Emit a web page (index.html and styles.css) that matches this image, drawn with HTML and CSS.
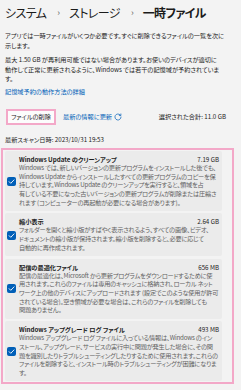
FILE: index.html
```html
<!DOCTYPE html>
<html lang="ja">
<head>
<meta charset="utf-8">
<link rel="stylesheet" href="styles.css">
</head>
<body>
<div class="page">
  <h1 class="crumbs"><span class="crumb">システム</span><span class="sep">›</span><span class="crumb">ストレージ</span><span class="sep">›</span><span class="crumb current">一時ファイル</span></h1>
  <p class="text intro">アプリでは一時ファイルがいくつか必要です。すぐに削除できるファイルの一覧を次に<br>示します。</p>
  <p class="text reserve">最大 1.50 GB が再利用可能ではない場合があります。お使いのデバイスが適切に<br>動作して正常に更新されるように、Windows では若干の記憶域が予約されていま<br>す。</p>
  <a class="link more">記憶域予約の動作方法の詳細</a>
  <div class="actions">
    <button class="btn">ファイルの削除</button>
    <a class="link refresh">最新の情報に更新 <svg class="ricon" viewBox="0 0 10 10" width="8" height="8"><path d="M7.6 2.2A3.8 3.8 0 1 0 8.8 5" fill="none" stroke="#005fb8" stroke-width="0.9" stroke-linecap="round"/><path d="M8.6 1.2V3.2H6.6" fill="none" stroke="#005fb8" stroke-width="0.9" stroke-linecap="round" stroke-linejoin="round"/></svg></a>
    <span class="total">選択された合計: 11.0 GB</span>
  </div>
  <div class="scan">最新スキャン日時: 2023/10/31 19:53</div>
  <div class="listwrap">
    <div class="list">
      <div class="card">
        <span class="check"><svg viewBox="0 0 10 10" width="9" height="9"><path d="M2.4 5.2L4.2 7L7.8 3.2" fill="none" stroke="#fff" stroke-width="1" stroke-linecap="round" stroke-linejoin="round"/></svg></span>
        <div class="body">
          <div class="head"><span class="title">Windows Update のクリーンアップ</span><span class="size">7.19 GB</span></div>
          <div class="desc">Windows では、新しいバージョンの更新プログラムをインストールした後でも、<br>Windows Update からインストールしたすべての更新プログラムのコピーを保<br>持しています。Windows Update のクリーンアップを実行すると、領域を占<br>有している不要になった古いバージョンの更新プログラムが削除または圧縮さ<br>れます (コンピューターの再起動が必要になる場合があります)。</div>
        </div>
      </div>
      <div class="card">
        <span class="check"><svg viewBox="0 0 10 10" width="9" height="9"><path d="M2.4 5.2L4.2 7L7.8 3.2" fill="none" stroke="#fff" stroke-width="1" stroke-linecap="round" stroke-linejoin="round"/></svg></span>
        <div class="body">
          <div class="head"><span class="title">縮小表示</span><span class="size">2.64 GB</span></div>
          <div class="desc">フォルダーを開くと縮小版がすばやく表示されるよう、すべての画像、ビデオ、<br>ドキュメントの縮小版が保持されます。縮小版を削除すると、必要に応じて<br>自動的に再作成されます。</div>
        </div>
      </div>
      <div class="card">
        <span class="check"><svg viewBox="0 0 10 10" width="9" height="9"><path d="M2.4 5.2L4.2 7L7.8 3.2" fill="none" stroke="#fff" stroke-width="1" stroke-linecap="round" stroke-linejoin="round"/></svg></span>
        <div class="body">
          <div class="head"><span class="title">配信の最適化ファイル</span><span class="size">656 MB</span></div>
          <div class="desc">配信の最適化は、Microsoft から更新プログラムをダウンロードするために使<br>用されます。これらのファイルは専用のキャッシュに格納され、ローカル ネット<br>ワーク上の他のデバイスにアップロードされます (設定でこのような使用が許可<br>されている場合)。空き領域が必要な場合は、これらのファイルを削除しても<br>問題ありません。</div>
        </div>
      </div>
      <div class="card">
        <span class="check"><svg viewBox="0 0 10 10" width="9" height="9"><path d="M2.4 5.2L4.2 7L7.8 3.2" fill="none" stroke="#fff" stroke-width="1" stroke-linecap="round" stroke-linejoin="round"/></svg></span>
        <div class="body">
          <div class="head"><span class="title">Windows アップグレード ログ ファイル</span><span class="size">493 MB</span></div>
          <div class="desc">Windows アップグレード ログ ファイルに入っている情報は、Windows のイン<br>ストール、アップグレード、サービスの実行中に問題が発生した場合に、その問<br>題を識別したりトラブルシューティングしたりするために使用されます。これらの<br>ファイルを削除すると、インストール時のトラブルシューティングが困難になりま<br>す。</div>
        </div>
      </div>
    </div>
    <div class="highlight"></div>
  </div>
</div>
</body>
</html>
```

FILE: styles.css
```css
html, body {
  margin: 0;
  padding: 0;
  background: #f3f3f3;
}
body {
  font-family: "Noto Sans CJK JP", "Noto Sans", sans-serif;
  font-feature-settings: "palt";
  color: #1b1b1b;
  overflow: hidden;
  height: 390px;
}
.page {
  padding: 0 19px 0 5px;
}
.crumbs {
  margin: 0;
  padding-top: 3px;
  height: 20px;
  font-size: 12px;
  line-height: 16px;
  font-weight: 400;
  letter-spacing: -0.6px;
  display: flex;
  align-items: center;
  white-space: nowrap;
}
.sep {
  color: #666;
  font-size: 9px;
  margin: 0 9px 0 11px;
  letter-spacing: 0;
}
.current {
  font-weight: 700;
}
.text {
  margin: 0;
  font-size: 6.2px;
  line-height: 9.6px;
  color: #1b1b1b;
  white-space: nowrap;
}
.intro {
  margin-top: 8px;
  margin-bottom: 5px;
}
.reserve {
  margin-bottom: 3px;
}
.link {
  font-size: 6.2px;
  line-height: 10px;
  color: #005fb8;
}
.more {
  display: block;
}
.actions {
  display: flex;
  align-items: center;
  margin-top: 12px;
  width: 221px;
  height: 16px;
}
.btn {
  font-family: inherit;
  font-feature-settings: "palt";
  font-size: 6.2px;
  color: #1b1b1b;
  background: #fcfcfc;
  border: 2px solid #f3a8c8;
  height: 16px;
  width: 50px;
  padding: 0;
  margin-left: 1px;
}
.refresh {
  margin: 0 0 0 7px;
  display: flex;
  align-items: center;
  gap: 2px;
}
.ricon {
  display: block;
}
.total {
  margin-left: auto;
  font-size: 6.2px;
  color: #1b1b1b;
}
.scan {
  font-size: 6.2px;
  line-height: 10px;
  margin-top: 10px;
  color: #1b1b1b;
}
.listwrap {
  position: relative;
  margin-top: 6px;
}
.list {
  display: flex;
  flex-direction: column;
  gap: 2.5px;
}
.card {
  background: #ebebeb;
  border-radius: 2px;
  display: flex;
  align-items: center;
  gap: 3px;
  padding: 4px 3px 3.5px 2px;
}
.check {
  flex: none;
  width: 9px;
  height: 9px;
  background: #005fb8;
  border-radius: 2px;
  display: flex;
}
.body {
  flex: 1;
  min-width: 0;
}
.head {
  display: flex;
  justify-content: space-between;
  font-size: 6.2px;
  line-height: 9px;
}
.title {
  font-weight: 700;
  color: #1b1b1b;
}
.size {
  color: #1b1b1b;
}
.desc {
  font-size: 6.2px;
  letter-spacing: -0.2px;
  line-height: 8.7px;
  color: #616161;
  white-space: nowrap;
}
.highlight {
  position: absolute;
  left: -4px;
  top: -3px;
  width: 233px;
  height: 236px;
  box-sizing: border-box;
  border: 2px solid #f3a8c8;
  pointer-events: none;
}
```
